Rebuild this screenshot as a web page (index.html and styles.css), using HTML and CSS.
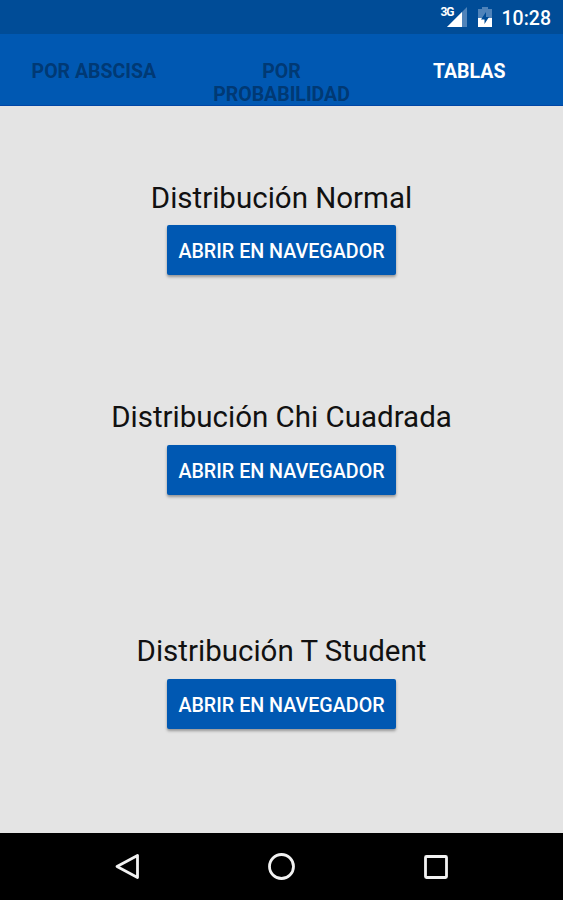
FILE: index.html
```html
<!DOCTYPE html>
<html lang="es">
<head>
	<meta charset="utf-8">
	<title>Tablas</title>
	<link rel="stylesheet" href="styles.css">
</head>
<body>
	<div class="status-bar">
		<span class="network">3G</span>
		<svg class="signal" width="20" height="20" viewBox="0 0 20 20">
			<path d="M20 0V20H0Z" fill="#4f83ba"/>
			<path d="M15 5V20H0Z" fill="#fff"/>
		</svg>
		<svg class="battery" width="14" height="20" viewBox="0 0 14 20">
			<path d="M4 0H10V2H14V11H0V2H4Z" fill="#4f83ba"/>
			<path d="M0 11H14V20H0Z" fill="#fff"/>
			<path d="M8 5L3 12.500H6.500V17L11 10H8Z" fill="#004c97"/>
		</svg>
		<span class="clock">10:28</span>
	</div>

	<nav class="tabs">
		<a class="tab">POR ABSCISA</a>
		<a class="tab">POR PROBABILIDAD</a>
		<a class="tab active">TABLAS</a>
	</nav>

	<main class="content">
		<section class="table-link">
			<h2>Distribución Normal</h2>
			<button>ABRIR EN NAVEGADOR</button>
		</section>
		<section class="table-link">
			<h2>Distribución Chi Cuadrada</h2>
			<button>ABRIR EN NAVEGADOR</button>
		</section>
		<section class="table-link">
			<h2>Distribución T Student</h2>
			<button>ABRIR EN NAVEGADOR</button>
		</section>
	</main>

	<footer class="nav-bar">
		<svg width="30" height="30" viewBox="0 0 30 30">
			<path d="M25.500 3.500V25.500L5 14.500Z"/>
		</svg>
		<svg width="30" height="30" viewBox="0 0 30 30">
			<circle cx="14.500" cy="14.500" r="12"/>
		</svg>
		<svg width="30" height="30" viewBox="0 0 30 30">
			<rect x="4.500" y="4.500" width="21" height="21" rx="1"/>
		</svg>
	</footer>
</body>
</html>
```
FILE: styles.css
```css
body {
	display: flex;
	flex-direction: column;
	height: 900px;
	margin: 0;
	background: #e4e4e4;
	font-family: Roboto, "Liberation Sans", sans-serif;
}

.status-bar {
	display: flex;
	align-items: flex-start;
	box-sizing: border-box;
	height: 34px;
	padding: 7px 12px 0 0;
	justify-content: flex-end;
	background: #004c97;
	color: #fff;
}

.network {
	font-size: 12px;
	font-weight: bold;
	letter-spacing: -1px;
	line-height: 11px;
	margin-right: -7px;
}

.battery {
	margin: 0 10px 0 11px;
}

.clock {
	font-size: 19.5px;
	font-weight: 500;
	line-height: 23px;
}

.tabs {
	display: flex;
	box-sizing: border-box;
	height: 72px;
	padding-top: 26px;
	background: #0058b2;
	border-bottom: 1px solid #0046a6;
}

.tab {
	flex: 1 1 0;
	box-sizing: border-box;
	padding: 0 20px;
	text-align: center;
	font-size: 19.5px;
	font-weight: bold;
	line-height: 23px;
	color: #003974;
}

.tab.active {
	color: #fff;
}

.content {
	flex: 1;
}

.table-link {
	display: flex;
	flex-direction: column;
	align-items: center;
	height: 94px;
	padding-top: 75px;
}

.table-link + .table-link {
	padding-top: 125px;
}

.table-link:last-child {
	padding-top: 140px;
}

.table-link h2 {
	margin: 0 0 10px;
	font-size: 29.5px;
	font-weight: normal;
	line-height: 34px;
	color: #111;
}

.table-link + .table-link h2 {
	margin-bottom: 11px;
}

.table-link button {
	flex-shrink: 0;
	width: 229px;
	height: 50px;
	padding: 2px 0 0;
	border: none;
	border-radius: 2px;
	background: #0058b2;
	box-shadow: 0 2px 3px rgba(0, 0, 0, 0.35);
	color: #fff;
	font-family: inherit;
	font-size: 19.7px;
	font-weight: 500;
	white-space: nowrap;
}

.nav-bar {
	display: flex;
	align-items: center;
	justify-content: center;
	gap: 124.500px;
	height: 67px;
	background: #000;
}

.nav-bar svg {
	fill: none;
	stroke: #f2f2f2;
	stroke-width: 2.8;
	stroke-linejoin: round;
}
```
